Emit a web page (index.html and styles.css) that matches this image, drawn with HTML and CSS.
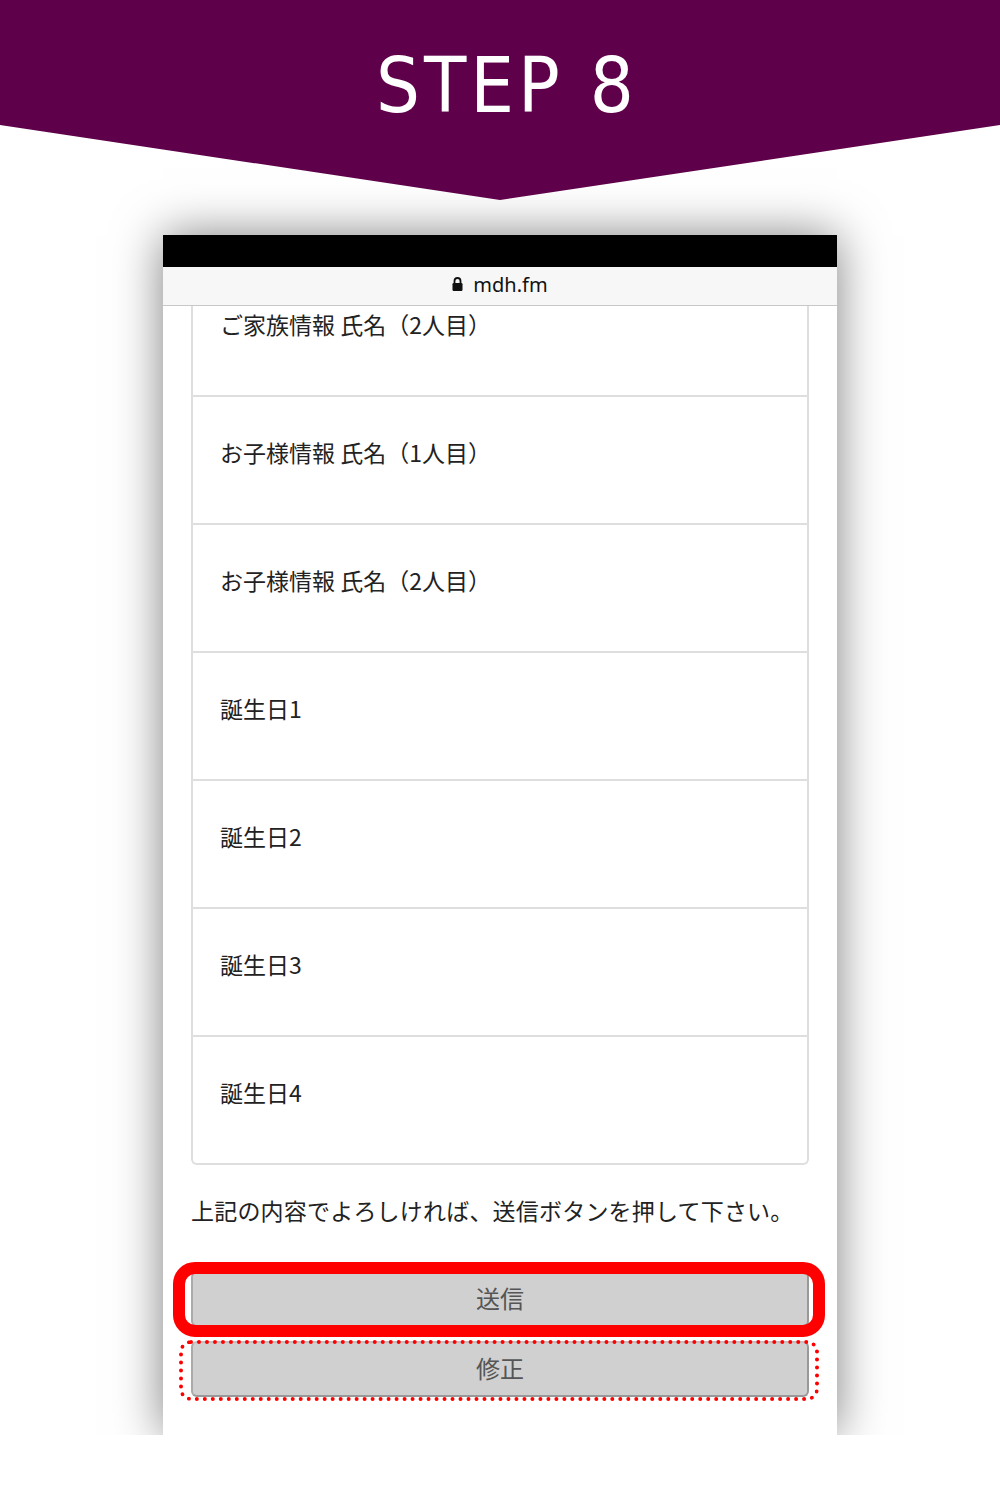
FILE: index.html
```html
<!DOCTYPE html>
<html lang="ja">
<head>
  <meta charset="UTF-8">
  <title>STEP 8</title>
  <link rel="stylesheet" href="styles.css">
</head>
<body>
  <!-- Banner -->
  <div class="banner">
    <div class="step-title">STEP 8</div>
  </div>

  <!-- Phone screenshot -->
  <div class="phone">
    <div class="status-bar"></div>
    <div class="address-bar">
      <svg class="lock" width="11" height="14" viewBox="0 0 11 14">
        <path d="M2.5 6V4a3 3 0 0 1 6 0v2" fill="none" stroke="#111" stroke-width="1.8"/>
        <rect x="0.5" y="6" width="10" height="8" rx="1.2" fill="#111"/>
      </svg>
      <span>mdh.fm</span>
    </div>

    <div class="screen">
      <div class="list">
        <div class="row">ご家族情報 氏名（2人目）</div>
        <div class="row">お子様情報 氏名（1人目）</div>
        <div class="row">お子様情報 氏名（2人目）</div>
        <div class="row">誕生日1</div>
        <div class="row">誕生日2</div>
        <div class="row">誕生日3</div>
        <div class="row">誕生日4</div>
      </div>

      <p class="message">上記の内容でよろしければ、送信ボタンを押して下さい。</p>

      <div class="buttons">
        <div class="btn-wrap">
          <button class="btn">送信</button>
          <span class="ring ring-solid"></span>
        </div>
        <div class="btn-wrap">
          <button class="btn">修正</button>
          <span class="ring ring-dotted"></span>
        </div>
      </div>
    </div>
  </div>
</body>
</html>
```

FILE: styles.css
```css
body {
  margin: 0;
  background: #fff;
  font-family: "Noto Sans CJK JP", "Noto Sans", sans-serif;
  color: #222;
}

.banner {
  height: 200px;
  background: #5e004a;
  clip-path: polygon(0 0, 100% 0, 100% 125px, 50% 200px, 0 125px);
  display: flex;
  justify-content: center;
}

.step-title {
  margin: 38px 0 0 14px;
  color: #fff;
  font-family: "DejaVu Sans", sans-serif;
  font-stretch: condensed;
  font-size: 77px;
  line-height: 96px;
  letter-spacing: 4px;
}

.phone {
  width: 674px;
  margin: 35px auto 0;
  background: #fff;
  box-shadow: 0 0 45px rgba(0, 0, 0, 0.5);
}

.status-bar {
  height: 32px;
  background: #000;
}

.address-bar {
  box-sizing: border-box;
  height: 39px;
  padding-bottom: 3px;
  background: #f7f7f7;
  border-bottom: 1px solid #c8c8c8;
  display: flex;
  justify-content: center;
  align-items: center;
  gap: 10px;
  font-family: "Noto Sans", sans-serif;
  font-size: 20px;
  color: #111;
}

.lock {
  margin-top: -2px;
}

.screen {
  overflow: hidden;
  padding: 0 28px 38px;
}

.list {
  margin-top: -37px;
  border: 2px solid #dedede;
  border-top: none;
  border-radius: 0 0 6px 6px;
}

.row {
  box-sizing: border-box;
  height: 128px;
  padding: 40px 27px 0;
  border-bottom: 2px solid #dedede;
  font-size: 23px;
  line-height: 30px;
}

.row:last-child {
  border-bottom: none;
  height: 126px;
}

.message {
  margin: 25px 0 0;
  font-size: 23px;
  line-height: 40px;
  letter-spacing: 0.2px;
  color: #222;
}

.buttons {
  margin-top: 41px;
  display: flex;
  flex-direction: column;
  gap: 14px;
}

.btn-wrap {
  position: relative;
}

.btn {
  display: block;
  width: 100%;
  height: 56px;
  padding: 0 0 3px;
  background: #d0d0d0;
  border: 2px solid #999;
  border-top-color: #c0c0c0;
  border-left-color: #aaa;
  border-radius: 6px;
  font-family: "Noto Sans CJK JP", sans-serif;
  font-size: 24px;
  color: #555;
}

.ring {
  position: absolute;
  pointer-events: none;
}

.ring-solid {
  top: -9px;
  bottom: -10px;
  left: -18px;
  right: -16px;
  border: 12px solid #f00;
  border-radius: 22px;
}

.ring-dotted {
  top: -1px;
  bottom: -4px;
  left: -12px;
  right: -10px;
  border: 4px dotted #f00;
  border-radius: 12px;
}
```
